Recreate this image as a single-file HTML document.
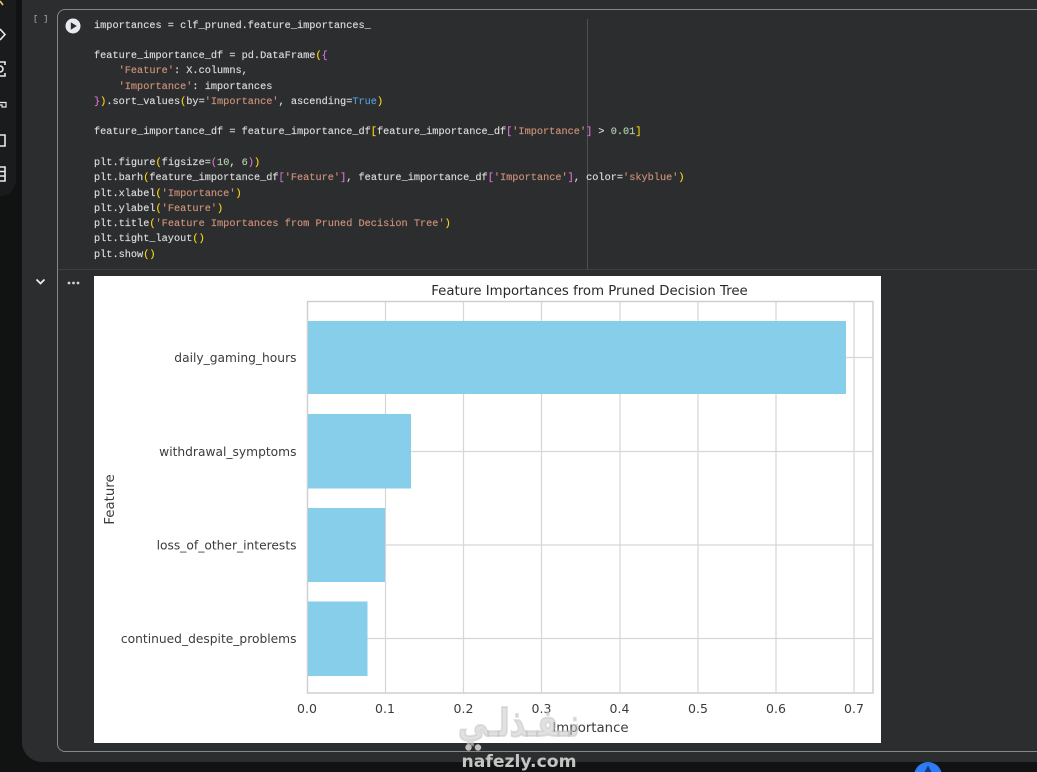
<!DOCTYPE html>
<html><head><meta charset="utf-8"><style>
html,body{margin:0;padding:0;background:#111212;}
body{width:1037px;height:772px;position:relative;overflow:hidden;}
.abs{position:absolute;}
#main{left:22px;top:-20px;width:1040px;height:782px;background:#2b2d2f;border-radius:0 0 0 20px;}
#side{left:-20px;top:-20px;width:36px;height:216px;background:#1a1b1c;border-radius:0 0 16px 0;}
#cell{left:57px;top:9px;width:1000px;height:741px;border:1px solid #85888a;border-radius:8px 0 0 8px;}
#sep{left:58px;top:269px;width:979px;height:1px;background:#3c3e40;}
#vline{left:587px;top:19px;width:1px;height:250px;background:#4f5153;}
#code{left:94px;top:18.6px;margin:0;font:10.26px/15.27px "Liberation Mono",monospace;color:#dcdcdc;white-space:pre;-webkit-text-stroke:.15px currentColor;}
.s{color:#ce9178}.y{color:#ffd710}.p{color:#da70d6}.b{color:#569cd6}.n{color:#b5cea8}.r{color:#e06c75}
#br{left:33px;top:14px;font:8.5px "Liberation Mono",monospace;color:#b5b7b9;}
svg{position:absolute;overflow:visible}
text{font-family:"DejaVu Sans",sans-serif;fill:#3c3c3c;}
</style></head><body>
<div class="abs" id="main"></div>
<div class="abs" id="side"></div>
<svg style="left:0;top:0" width="22" height="190" fill="none" stroke="#e8eaed" stroke-width="1.6">
<path d="M0 1L3 5" stroke="#e8d070"/>
<path d="M0 29L5 34.500L0 40"/>
<path d="M0 62H5V65M5 73V76H0M0 66A3 3 0 0 1 0 72"/>
<path d="M0 102.500H6V107H2V105H0" stroke-width="1.200"/>
<path d="M0 135H5V146H0"/>
<path d="M0 167H5V181H0M0 171.500H5M0 176H5"/>
</svg>
<div class="abs" id="cell"></div>
<div class="abs" id="sep"></div>
<div class="abs" id="vline"></div>
<div class="abs" id="br">[ ]</div>
<svg style="left:65px;top:18px" width="16" height="16"><circle cx="8" cy="8" r="7.500" fill="#e8eaed"/><path d="M5.800 4.200L11.800 8L5.800 11.800Z" fill="#2b2d2f"/></svg>
<svg style="left:34px;top:277px" width="14" height="10" fill="none"><path d="M2.500 2.500L6.500 6.500L10.500 2.500" stroke="#e8eaed" stroke-width="1.800"/></svg>
<svg style="left:67px;top:280px" width="14" height="6" fill="#d0d2d4"><circle cx="2" cy="3" r="1.400"/><circle cx="6.500" cy="3" r="1.400"/><circle cx="11" cy="3" r="1.400"/></svg>
<pre class="abs" id="code">importances = clf_pruned.feature_importances_

feature_importance_df = pd.DataFrame<span class="y">(</span><span class="p">{</span>
    <span class="s">'Feature'</span>: X.columns,
    <span class="s">'Importance'</span>: importances
<span class="p">}</span><span class="y">)</span>.sort_values<span class="y">(</span>by=<span class="s">'Importance'</span>, ascending=<span class="b">True</span><span class="y">)</span>

feature_importance_df = feature_importance_df<span class="y">[</span>feature_importance_df<span class="p">[</span><span class="s">'Importance'</span><span class="p">]</span> &gt; <span class="n">0.01</span><span class="y">]</span>

plt.figure<span class="y">(</span>figsize=<span class="p">(</span><span class="n">10</span>, <span class="n">6</span><span class="p">)</span><span class="y">)</span>
plt.barh<span class="y">(</span>feature_importance_df<span class="p">[</span><span class="s">'Feature'</span><span class="p">]</span>, feature_importance_df<span class="p">[</span><span class="s">'Importance'</span><span class="p">]</span>, color=<span class="s">'skyblue'</span><span class="y">)</span>
plt.xlabel<span class="y">(</span><span class="s">'Importance'</span><span class="y">)</span>
plt.ylabel<span class="y">(</span><span class="s">'Feature'</span><span class="y">)</span>
plt.title<span class="y">(</span><span class="s">'Feature Importances from Pruned Decision Tree'</span><span class="y">)</span>
plt.tight_layout<span class="y">()</span>
plt.show<span class="y">()</span></pre>
<svg style="left:0;top:0" width="1037" height="772">
<rect x="94" y="276" width="787" height="467" fill="#fff"/>
<g stroke="#d6d6d6" stroke-width="1.200" fill="none">
<path d="M385.500 301.500V693M463.500 301.500V693M541.500 301.500V693M620 301.500V693M698 301.500V693M776 301.500V693M854 301.500V693"/>
<path d="M308 357.500H873M308 451.500H873M308 545H873M308 638.500H873"/>
</g>
<rect x="307.500" y="301.500" width="565.500" height="391.500" fill="none" stroke="#cfcfcf" stroke-width="1.500"/>
<g fill="#87ceeb">
<rect x="308" y="321" width="538" height="73"/>
<rect x="308" y="414" width="103" height="74.500"/>
<rect x="308" y="508" width="77" height="74"/>
<rect x="308" y="601.500" width="59.500" height="74.500"/>
</g>
<text x="589.500" y="295" font-size="13.300" text-anchor="middle" style="fill:#2a2a2a">Feature Importances from Pruned Decision Tree</text>
<g font-size="12.250" text-anchor="end">
<text x="296.500" y="362">daily_gaming_hours</text>
<text x="296.500" y="456">withdrawal_symptoms</text>
<text x="296.500" y="549.500">loss_of_other_interests</text>
<text x="296.500" y="643">continued_despite_problems</text>
</g>
<g font-size="12.500" text-anchor="middle">
<text x="307" y="713">0.0</text>
<text x="385" y="713">0.1</text>
<text x="463.500" y="713">0.2</text>
<text x="541.500" y="713">0.3</text>
<text x="619.500" y="713">0.4</text>
<text x="698" y="713">0.5</text>
<text x="776" y="713">0.6</text>
<text x="854" y="713">0.7</text>
</g>
<text x="590.500" y="732" font-size="13.300" text-anchor="middle">Importance</text>
<text transform="translate(114 499.500) rotate(-90)" font-size="13.300" text-anchor="middle">Feature</text>
<text x="519" y="736" font-size="38" font-weight="bold" text-anchor="middle" textLength="122" lengthAdjust="spacingAndGlyphs" style="fill:#c4c4c4;fill-opacity:.5;stroke:#c4c4c4;stroke-opacity:.5;stroke-width:2" direction="rtl">نـفـذلـي</text>
<circle cx="468.500" cy="747.500" r="3.200" fill="#c0c0c0"/><circle cx="478" cy="747.500" r="3.200" fill="#c0c0c0"/>
<text x="519" y="767" font-size="17" font-weight="bold" text-anchor="middle" textLength="115" lengthAdjust="spacingAndGlyphs" style="fill:#c4c4c4">nafezly.com</text>
<circle cx="928" cy="776" r="14" fill="#2e7bf6"/>
<path d="M928 765.500L924.500 772H931.500Z" fill="#123a80"/>
</svg>
</body></html>
